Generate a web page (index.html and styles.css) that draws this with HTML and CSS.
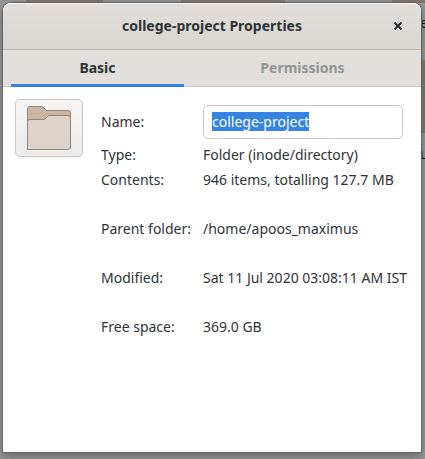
FILE: index.html
```html
<!DOCTYPE html>
<html lang="en">
<head>
<meta charset="utf-8">
<title>college-project Properties</title>
<link rel="stylesheet" href="styles.css">
</head>
<body>
<div class="desktop">
  <span class="behind behind-top">es</span>
  <span class="behind behind-mid">u</span>
  <main class="window">
    <header class="titlebar">
      <h1>college-project Properties</h1>
      <button class="close" type="button" aria-label="Close">
        <svg width="10" height="12" viewBox="0 0 10 12"><path d="M1.5 4.5L8.5 11.5M8.5 4.5L1.5 11.5" stroke="#fff" stroke-width="2" opacity=".6"/><path d="M1.5 3.5L8.5 10.5M8.5 3.5L1.5 10.5" stroke="#2e3436" stroke-width="2.2"/></svg>
      </button>
    </header>
    <nav class="tabs">
      <button class="tab active" type="button">Basic</button>
      <button class="tab" type="button">Permissions</button>
    </nav>
    <section class="content">
      <button class="icon-button" type="button" aria-label="Choose icon">
        <svg width="46" height="46" viewBox="0 0 46 46">
          <path d="M1 45.5H43" stroke="#fff"/>
          <path d="M1.5 44V4Q1.5 1.5 4 1.5H15Q17 1.5 18 3L20.5 5.5H42Q44.5 5.5 44.5 8V30H1.5Z" fill="#c9b5a5" stroke="#98816f"/>
          <path d="M1.5 44.5V16.5Q1.5 14.5 3.5 14.5H17.5Q19 14.5 20 13L21.5 11.5Q22.5 10.5 24 10.5H42Q44.5 10.5 44.5 13V42Q44.5 44.5 42 44.5Z" fill="#ded3ca" stroke="#98816f"/>
        </svg>
      </button>
      <div class="details">
        <label for="name">Name:</label>
        <input id="name" type="text" value="college-project" spellcheck="false">
        <span>Type:</span><span>Folder (inode/directory)</span>
        <span>Contents:</span><span>946 items, totalling 127.7 MB</span>
        <span class="spaced">Parent folder:</span><span class="spaced">/home/apoos_maximus</span>
        <span class="spaced">Modified:</span><span class="spaced">Sat 11 Jul 2020 03:08:11 AM IST</span>
        <span class="spaced">Free space:</span><span class="spaced">369.0 GB</span>
      </div>
    </section>
  </main>
</div>
<script src="script.js"></script>
</body>
</html>
```
FILE: styles.css
```css
* { box-sizing: border-box; }
body {
  margin: 0;
  font: 14px/19px "Noto Sans", sans-serif;
  color: #2e3436;
}
button, input { font: inherit; color: inherit; }
.desktop {
  position: relative;
  display: flex;
  min-height: 100vh;
  padding: 3px 4px 7px 3px;
  overflow: hidden;
  background:
    linear-gradient(#81766f, #81766f) 26px 0 / 77px 3px no-repeat,
    linear-gradient(#81766f, #81766f) 181px 0 / 104px 3px no-repeat,
    linear-gradient(#81766f, #81766f) 392px 0 / 33px 3px no-repeat,
    linear-gradient(#81766f, #81766f) 100% 60px / 4px 73px no-repeat,
    #949494;
}
.behind { position: absolute; left: 420px; color: #111; }
.behind-top { top: 13px; }
.behind-mid { top: 144px; }
.window {
  position: relative;
  flex: 1;
  min-width: 0;
  display: flex;
  flex-direction: column;
  background: #fff;
  border-radius: 8px 8px 0 0;
  box-shadow: 0 0 0 1px #646464, 0 3px 8px rgba(0, 0, 0, 0.35);
}
.titlebar {
  position: relative;
  display: flex;
  align-items: center;
  justify-content: center;
  height: 47px;
  padding-bottom: 2px;
  border-bottom: 1px solid #bfb8b1;
  border-radius: 8px 8px 0 0;
  background: linear-gradient(#e1dedb, #dad6d2);
  box-shadow: inset 0 1px #f6f5f4;
}
h1 { margin: 0; font-size: 14px; font-weight: 700; }
.close {
  position: absolute;
  right: 18px;
  display: flex;
  padding: 0;
  border: 0;
  background: none;
}
.tabs {
  display: flex;
  gap: 8px;
  height: 37px;
  padding: 0 8px;
  background: #e1dedb;
  box-shadow: inset 0 -1px #cdc7c2;
}
.tab {
  flex: 1 1 auto;
  padding: 0 0 2px;
  border: 0;
  background: none;
  font-weight: 700;
  color: #929595;
}
.tab.active { color: #2e3436; box-shadow: inset 0 -3px #3584e4; }
.content {
  display: flex;
  align-items: flex-start;
  gap: 18px;
  padding: 12px 18px 12px 12px;
}
.icon-button {
  display: flex;
  flex: none;
  padding: 5px 10px;
  width: 68px;
  height: 58px;
  border: 1px solid #cdc7c2;
  border-radius: 5px;
  background: linear-gradient(#f6f5f4, #edebe9);
  box-shadow: 0 1px 2px rgba(0, 0, 0, 0.07);
}
.details {
  flex: 1;
  min-width: 0;
  display: grid;
  grid-template-columns: 90px minmax(0, 1fr);
  column-gap: 12px;
  row-gap: 6px;
  align-items: center;
  padding-top: 6px;
  white-space: nowrap;
}
label { padding-bottom: 2px; }
#name {
  width: 100%;
  height: 34px;
  padding: 0 8px 2px;
  border: 1px solid #cdc7c2;
  border-radius: 5px;
  outline: none;
  background: #fff;
}
#name::selection { color: #fff; background: #3584e4; }
.spaced { margin-top: 24px; }
```
FILE: script.js
```js
const nameField = document.getElementById("name");
nameField.focus();
nameField.select();
```
